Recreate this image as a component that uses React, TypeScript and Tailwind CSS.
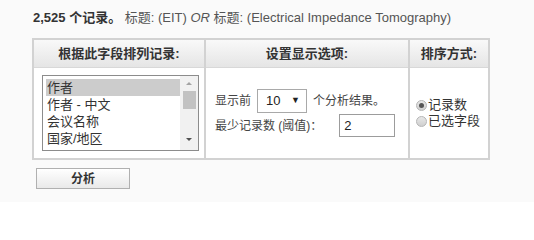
import React from "react";

const cjk = { fontFamily: '"Liberation Sans", "Noto Sans CJK SC", sans-serif' };

function ListBox() {
  const items = ["作者", "作者 - 中文", "会议名称", "国家/地区"];
  return (
    <div className="flex h-[76px] w-[157px] overflow-hidden border border-[#8c8c8c] bg-white">
      <div className="flex-1 pl-[3px] pt-[3px]">
        {items.map((t, i) => (
          <div
            key={t}
            className={
              "h-[17px] pl-[1px] text-[13px] leading-[17px] text-[#333] " +
              (i === 0 ? "bg-[#cccccc]" : "")
            }
          >
            {t}
          </div>
        ))}
      </div>
      <div className="flex w-[18px] flex-col items-center bg-[#f1f1f1] pt-[6px]">
        <div className="h-0 w-0 border-x-[3px] border-b-[3px] border-x-transparent border-b-[#a3a3a3]" />
        <div className="mt-[6px] h-[18px] w-[13px] bg-[#c2c2c2]" />
        <div className="mt-[29px] h-0 w-0 border-x-[3px] border-t-[3px] border-x-transparent border-t-[#505050]" />
      </div>
    </div>
  );
}

function Radio({ checked }: { checked: boolean }) {
  return (
    <span className="relative mr-[1px] inline-flex h-[11px] w-[11px] items-center justify-center rounded-full border border-[#b5b5b5] bg-linear-to-b from-[#e8e8e8] to-[#cfcfcf]">
      {checked && <span className="h-[5px] w-[5px] rounded-full bg-[#555]" />}
    </span>
  );
}

export default function App() {
  return (
    <div className="h-[202px] w-[534px] bg-[#fafafa] pl-[32px] pt-[9px] text-[#333]" style={cjk}>
      <div className="h-[18px] whitespace-nowrap pl-[1px] text-[13px] leading-[18px] text-[#555]">
        <span className="font-bold text-[#333]">2,525 个记录。</span> 标题: (EIT) <i>OR</i> 标题: (Electrical Impedance Tomography)
      </div>
      <div className="mt-[11px] flex h-[122px] w-[458px] border-2 border-[#d2d2d2] bg-white">
        <div className="flex w-[170px] flex-col">
          <div className="flex h-[28px] items-center justify-center border-b border-[#d8d8d8] bg-linear-to-b from-[#f9f9f9] to-[#e5e5e5] text-[13px] font-bold">
            根据此字段排列记录:
          </div>
          <div className="flex flex-1 items-center pl-[8px]">
            <ListBox />
          </div>
        </div>
        <div className="flex w-[204px] flex-col border-l-2 border-[#d2d2d2]">
          <div className="flex h-[28px] items-center justify-center border-b border-[#d8d8d8] bg-linear-to-b from-[#f9f9f9] to-[#e5e5e5] text-[13px] font-bold">
            设置显示选项:
          </div>
          <div className="flex flex-1 flex-col justify-center pl-[9px] text-[12px] text-[#444]">
            <div className="flex items-center">
              <span>显示前</span>
              <span className="ml-[6px] flex h-[24px] w-[50px] items-center justify-between border border-[#a9a9a9] bg-white pl-[8px] pr-[6px] text-[13px] text-[#222]">
                <span>10</span>
                <span className="text-[9px]">▼</span>
              </span>
              <span className="ml-[6px]">个分析结果。</span>
            </div>
            <div className="mt-[1px] flex items-center">
              <span>最少记录数 (阈值)：</span>
              <span className="ml-[17px] flex h-[23px] w-[56px] items-center border border-[#9c9c9c] bg-white pl-[4px] text-[13px] text-[#222]">
                2
              </span>
            </div>
          </div>
        </div>
        <div className="flex flex-1 flex-col border-l-2 border-[#d2d2d2]">
          <div className="flex h-[28px] items-center justify-center border-b border-[#d8d8d8] bg-linear-to-b from-[#f9f9f9] to-[#e5e5e5] text-[13px] font-bold">
            排序方式:
          </div>
          <div className="flex flex-1 flex-col justify-center pl-[6px] text-[13px] leading-[16px] text-[#333]">
            <div className="flex items-center">
              <Radio checked />
              <span>记录数</span>
            </div>
            <div className="flex items-center">
              <Radio checked={false} />
              <span>已选字段</span>
            </div>
          </div>
        </div>
      </div>
      <div className="ml-[4px] mt-[8px] flex h-[21px] w-[94px] items-center justify-center border border-[#b0b0b0] bg-linear-to-b from-[#ffffff] to-[#e9e9e9] text-[12px] font-bold text-[#333]">
        分析
      </div>
    </div>
  );
}
